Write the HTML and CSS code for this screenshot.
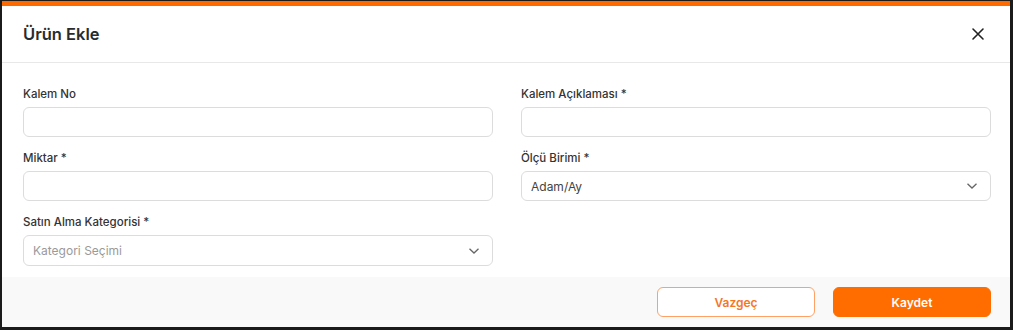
FILE: index.html
```html
<!DOCTYPE html>
<html lang="tr">
<head>
    <meta charset="UTF-8">
    <meta name="viewport" content="width=device-width, initial-scale=1.0">
    <title>Ürün Ekle</title>
    <link rel="stylesheet" href="styles.css">
</head>
<body>

    <div class="modal">
        <div class="modal-header">
            <h2>Ürün Ekle</h2>
            <button class="close-btn" type="button" aria-label="Kapat">
                <svg width="14" height="14" viewBox="0 0 14 14">
                    <path d="M2 2 L12 12 M12 2 L2 12" stroke="#222" stroke-width="1.6" stroke-linecap="round"/>
                </svg>
            </button>
        </div>

        <form class="modal-body">
            <div class="form-group">
                <label for="kalemNo">Kalem No</label>
                <input type="text" id="kalemNo">
            </div>
            <div class="form-group">
                <label for="aciklama">Kalem Açıklaması *</label>
                <input type="text" id="aciklama">
            </div>
            <div class="form-group">
                <label for="miktar">Miktar *</label>
                <input type="text" id="miktar">
            </div>
            <div class="form-group">
                <label for="birim">Ölçü Birimi *</label>
                <div class="select" id="birim">
                    <span class="value">Adam/Ay</span>
                    <svg class="chevron" width="12" height="8" viewBox="0 0 12 8">
                        <path d="M1.5 1.8 L6 6 L10.5 1.8" fill="none" stroke="#666" stroke-width="1.3"/>
                    </svg>
                </div>
            </div>
            <div class="form-group">
                <label for="kategori">Satın Alma Kategorisi *</label>
                <div class="select tall" id="kategori">
                    <span class="placeholder">Kategori Seçimi</span>
                    <svg class="chevron" width="12" height="8" viewBox="0 0 12 8">
                        <path d="M1.5 1.8 L6 6 L10.5 1.8" fill="none" stroke="#666" stroke-width="1.3"/>
                    </svg>
                </div>
            </div>
        </form>

        <div class="modal-footer">
            <button type="button" class="btn btn-outline">Vazgeç</button>
            <button type="button" class="btn btn-primary">Kaydet</button>
        </div>
    </div>

</body>
</html>
```

FILE: styles.css
```css
html, body {
    height: 100%;
}
body {
    margin: 0;
    background-color: #1b1b1b;
    font-family: Inter, "Liberation Sans", Arial, sans-serif;
    color: #333;
    overflow: hidden;
}
.modal {
    margin: 1px 3px 0 2px;
    height: 326px;
    box-sizing: border-box;
    background-color: #fff;
    border-top: 5px solid #ff6a00;
    display: flex;
    flex-direction: column;
}
.modal-header {
    height: 57px;
    box-sizing: border-box;
    display: flex;
    align-items: center;
    justify-content: space-between;
    padding: 0 24px 0 21px;
    border-bottom: 1px solid #e8e8e8;
}
.modal-header h2 {
    margin: 0;
    font-size: 16.5px;
    font-weight: 600;
    color: #2b2b2b;
}
.close-btn {
    background: none;
    border: none;
    padding: 0;
    width: 16px;
    height: 16px;
    display: flex;
    align-items: center;
    justify-content: center;
    cursor: pointer;
}
.modal-body {
    flex: 1;
    display: grid;
    grid-template-columns: 1fr 1fr;
    column-gap: 28px;
    row-gap: 13px;
    align-content: start;
    padding: 23px 19px 0 21px;
}
.form-group {
    display: flex;
    flex-direction: column;
}
.form-group label {
    font-size: 11.5px;
    font-weight: 500;
    color: #333;
    line-height: 16px;
    margin-bottom: 5px;
}
.form-group input[type="text"],
.select {
    height: 30px;
    box-sizing: border-box;
    border: 1px solid #dcdcdc;
    border-radius: 6px;
    font-family: inherit;
    font-size: 12px;
    outline: none;
    padding: 0 9px;
}
.select {
    display: flex;
    align-items: center;
    justify-content: space-between;
    padding: 0 12px 0 9px;
}
.select.tall {
    height: 31px;
}
.select .value {
    color: #444;
}
.select .placeholder {
    color: #9a9a9a;
}
.modal-footer {
    height: 50px;
    box-sizing: border-box;
    background-color: #f9f9f9;
    display: flex;
    align-items: center;
    justify-content: flex-end;
    gap: 18px;
    padding: 0 19px 0 0;
}
.btn {
    width: 158px;
    height: 30px;
    border-radius: 6px;
    font-family: inherit;
    font-size: 12px;
    font-weight: 600;
    cursor: pointer;
}
.btn-outline {
    background-color: #fff;
    border: 1px solid #ffa165;
    color: #f47726;
}
.btn-primary {
    background-color: #ff6d00;
    border: 1px solid #ff6d00;
    color: #fff;
}
```
